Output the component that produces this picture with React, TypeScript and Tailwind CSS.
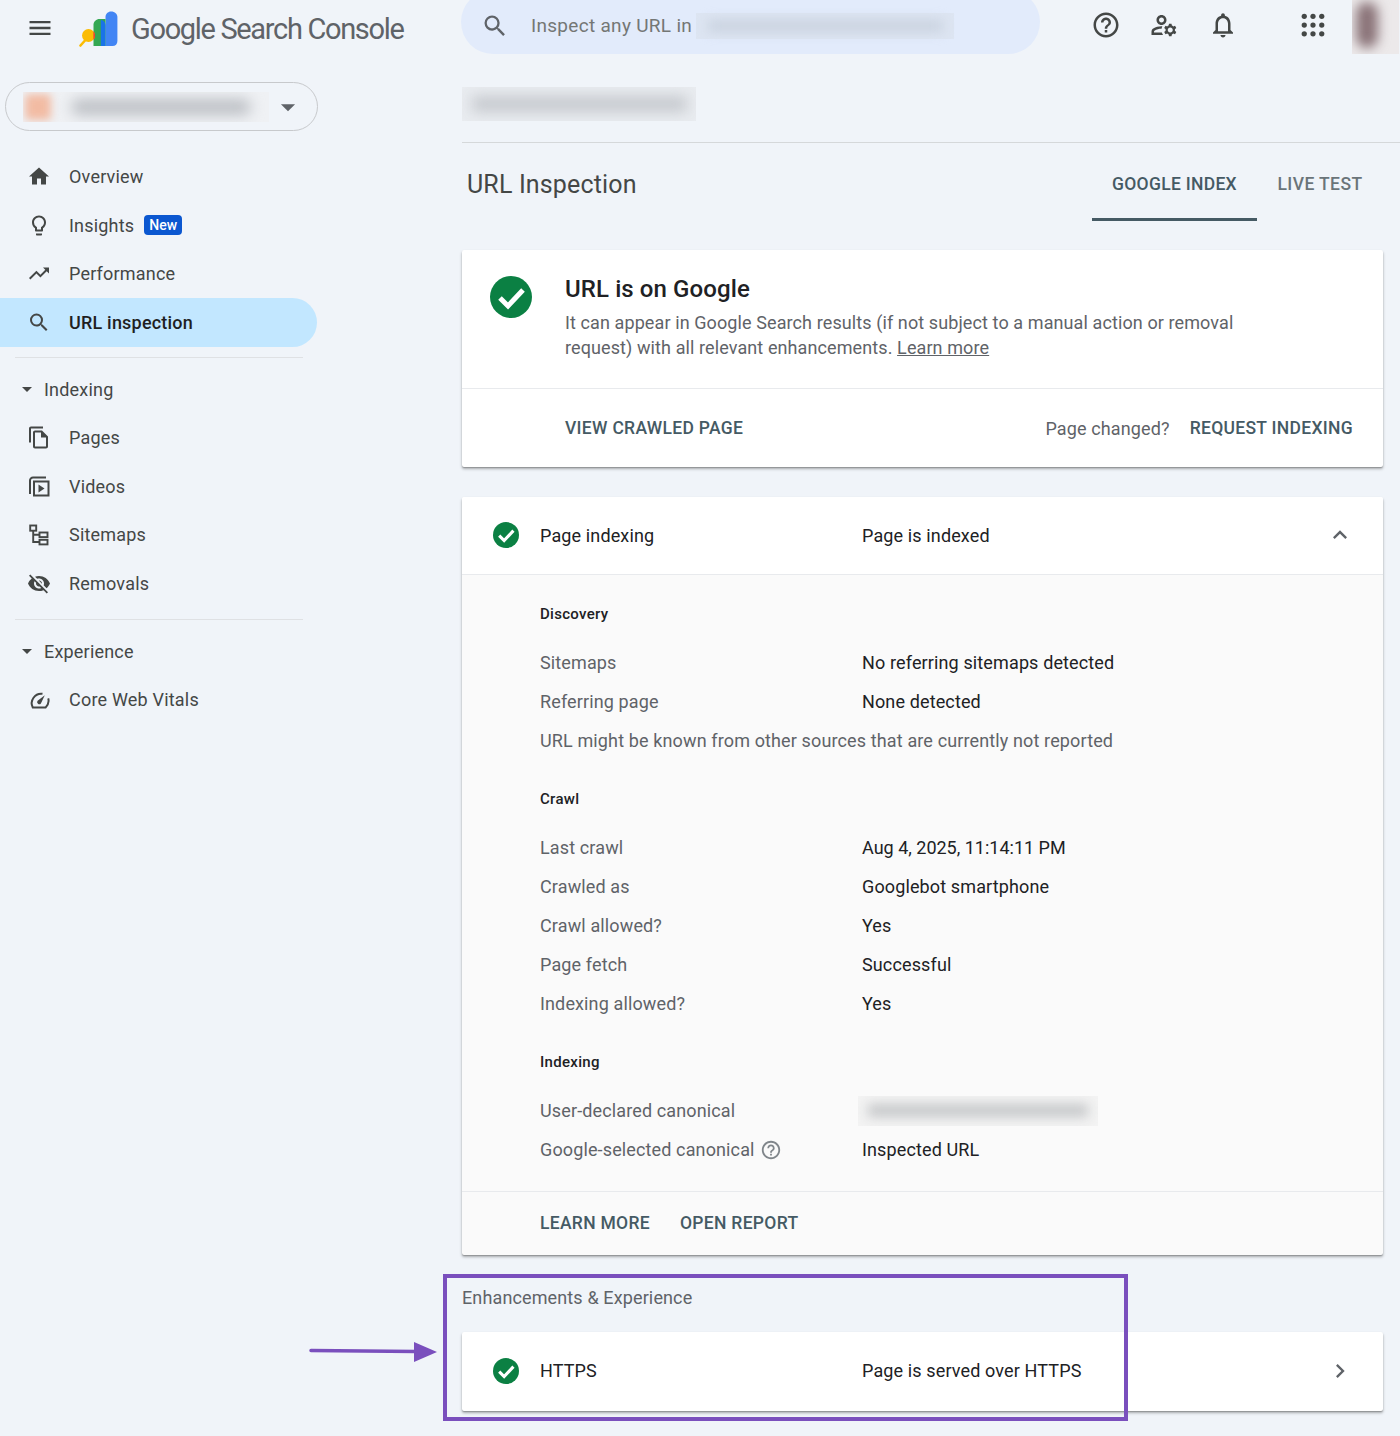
import React from "react";
import {
  MdMenu, MdHome, MdOutlineLightbulb, MdTrendingUp, MdSearch, MdOutlineFileCopy, MdVisibilityOff,
  MdHelpOutline, MdOutlineManageAccounts, MdNotificationsNone, MdExpandLess, MdChevronRight,
  MdArrowDropDown, MdOutlineHelpOutline,
} from "react-icons/md";

function VideosIcon() {
  return (
    <svg viewBox="0 0 24 24" className="w-6 h-6" fill="none" stroke="#444746" strokeWidth="2">
      <path d="M3 20V6.500a3 3 0 0 1 3-3h13" />
      <rect x="7" y="7.500" width="14.500" height="14" />
      <path d="M11.500 10.500v8l6-4z" fill="#444746" stroke="none" />
    </svg>
  );
}
function SitemapIcon() {
  return (
    <svg viewBox="0 0 24 24" className="w-6 h-6" fill="none" stroke="#444746" strokeWidth="1.900">
      <rect x="3.200" y="2.500" width="6" height="5.200" />
      <rect x="12.500" y="9.500" width="8" height="4.600" />
      <rect x="12.500" y="16.800" width="8" height="4.600" />
      <path d="M6.200 7.700V19h6.300M6.200 11.800h6.300" />
    </svg>
  );
}
function GaugeIcon() {
  return (
    <svg viewBox="0 0 24 24" className="w-6 h-6" fill="none" stroke="#444746" strokeWidth="2">
      <path d="M15.500 6.800A9.500 9.500 0 0 0 5.800 20.500h12.800a9.500 9.500 0 0 0 3-6.500c0-1-.1-1.800-.4-2.600" />
      <path d="M10.600 13.800 17.800 8.200l-3.900 8.200a2 2 0 0 1-3.300-2.600z" fill="#444746" stroke="none" />
    </svg>
  );
}
function AppsIcon() {
  const dots = [5, 12, 19];
  return (
    <svg viewBox="0 0 24 24" className="w-[30px] h-[30px]" fill="#444746">
      {dots.map((y) => dots.map((x) => <circle key={`${x}-${y}`} cx={x} cy={y} r="2.100" />))}
    </svg>
  );
}
function CheckIcon({ size }: { size: "lg" | "sm" }) {
  return (
    <svg viewBox="0 0 42 42" className={`block ${size === "lg" ? "w-[42px] h-[42px]" : "w-[26px] h-[26px]"}`}>
      <circle cx="21" cy="21" r="21" fill="#0b8043" />
      <path d="M10 22l8 8 15-16" fill="none" stroke="#fff" strokeWidth="5" />
    </svg>
  );
}
function Logo() {
  return (
    <svg viewBox="0 0 40 40" className="block w-10 h-10 shrink-0">
      <path d="M32 2.500c-3 0-5.500 2.400-5.500 5.500v29h7c3 0 4.900-2 4.900-5V8c0-3-2.400-5.500-6.400-5.500z" fill="#4285f4" />
      <path d="M14.500 15.500c0-2.800 2.800-5.500 6-5.500h6v27h-12z" fill="#34a853" />
      <path d="M21.800 10.800a6 6 0 0 1 4.700 5.300V37h-4.700z" fill="#1a73e8" />
      <circle cx="9.500" cy="26.500" r="6.500" fill="#fbbc04" />
      <path d="M14.500 22.300a6.500 6.500 0 0 1 0 8.400l-.1.100v-8.500z" fill="#ea4335" />
      <path d="M1.500 36.500l4.500-5" stroke="#fbbc04" strokeWidth="2.600" strokeLinecap="round" />
    </svg>
  );
}

function NavItem({ icon, label, active, children }: { icon: React.ReactNode; label: string; active?: boolean; children?: React.ReactNode }) {
  return (
    <div className={`h-[48.750px] w-[317px] flex items-center pl-[27px] rounded-r-full text-[18px] tracking-[0.2px] ${active ? "bg-[#c2e7ff] text-[#1f1f1f] font-medium" : "text-[#444746]"}`}>
      <span className="w-6 h-6 flex items-center justify-center text-[#444746] text-[25px] shrink-0">{icon}</span>
      <span className="ml-[18px]">{label}</span>
      {children}
    </div>
  );
}
function Group({ label }: { label: string }) {
  return (
    <div className="h-[48px] flex items-center text-[18px] tracking-[0.2px] text-[#444746]">
      <span className="w-0 h-0 ml-[22px] border-x-[5px] border-x-transparent border-t-[5px] border-t-[#444746]" />
      <span className="ml-[12px]">{label}</span>
    </div>
  );
}
function Row({ label, value, children }: { label: string; value?: React.ReactNode; children?: React.ReactNode }) {
  return (
    <div className="h-[39px] flex items-center text-[18px] tracking-[0.13px]">
      <div className="w-[322px] shrink-0 flex items-center text-[#5f6368]">{label}{children}</div>
      <div className="text-[#202124]">{value}</div>
    </div>
  );
}
function SectionTitle({ children, className }: { children: React.ReactNode; className: string }) {
  return <div className={`text-[15px] font-medium tracking-[0.3px] text-[#202124] leading-5 ${className}`}>{children}</div>;
}
const actionText = "text-[17.500px] font-medium tracking-[0.3px] text-[#455a64]";

export default function App() {
  return (
    <div className="relative w-[1400px] h-[1436px] overflow-hidden bg-[#f0f4f9] font-['Roboto',sans-serif]">
      <div className="flex h-full">
        <aside className="w-[462px] shrink-0">
          <div className="h-[56px] flex items-center">
            <MdMenu className="ml-[26px] text-[#444746] text-[28px]" />
            <span className="ml-[25px] mt-[1px]"><Logo /></span>
            <span className="ml-[12px] mt-[4px] text-[29px] tracking-[-1.330px] text-[#5f6368]">Google Search Console</span>
          </div>
          <div className="ml-[5px] mt-[26px] w-[313px] h-[49px] rounded-full border border-[#c7c9cc] flex items-center overflow-hidden">
            <div className="ml-[17px] w-[246px] h-[30px] flex items-center overflow-hidden bg-[#eff1f4]">
              <div className="ml-[2px] w-[26px] h-[26px] rounded-sm bg-[#f2bba3] blur-[4px]" />
              <div className="ml-[20px] w-[180px] h-[16px] rounded-full bg-[#bcbfc4] blur-[7px]" />
            </div>
            <MdArrowDropDown className="ml-[2px] text-[#5f6368] text-[34px]" />
          </div>
          <nav className="mt-[21px]">
            <NavItem icon={<MdHome />} label="Overview" />
            <NavItem icon={<MdOutlineLightbulb />} label="Insights">
              <span className="ml-[10px] h-5 px-[5px] flex items-center rounded-[4px] bg-[#0b57d0] text-white text-[14px] font-medium tracking-normal">New</span>
            </NavItem>
            <NavItem icon={<MdTrendingUp />} label="Performance" />
            <NavItem icon={<MdSearch />} label="URL inspection" active />
            <div className="ml-[15px] mt-[10px] mb-[7px] w-[288px] h-px bg-[#dfe1e4]" />
            <Group label="Indexing" />
            <NavItem icon={<MdOutlineFileCopy />} label="Pages" />
            <NavItem icon={<VideosIcon />} label="Videos" />
            <NavItem icon={<SitemapIcon />} label="Sitemaps" />
            <NavItem icon={<MdVisibilityOff />} label="Removals" />
            <div className="ml-[15px] mt-[11px] mb-[7px] w-[288px] h-px bg-[#dfe1e4]" />
            <Group label="Experience" />
            <NavItem icon={<GaugeIcon />} label="Core Web Vitals" />
          </nav>
        </aside>

        <main className="w-[921px] shrink-0">
          <div className="relative h-[54px] w-[960px] flex">
            <div className="-mt-[10px] w-[579px] h-[64px] rounded-[32px] bg-[#e2ebfb] flex items-center pt-[8px] -ml-px shrink-0">
              <MdSearch className="ml-[20px] text-[#5f6368] text-[28px]" />
              <span className="ml-[22px] text-[19px] text-[#747775] tracking-[0.3px]">Inspect any URL in</span>
              <div className="ml-[4px] w-[258px] h-[26px] bg-[#dde5f2] flex items-center justify-center">
                <div className="w-[235px] h-[12px] bg-[#c9d2df] blur-[6px]" />
              </div>
            </div>
            <div className="flex items-center text-[#444746] text-[30px] -mt-[4px] shrink-0">
              <MdHelpOutline className="ml-[51px]" />
              <MdOutlineManageAccounts className="ml-[28px]" />
              <MdNotificationsNone className="ml-[29px]" />
              <span className="ml-[60px]"><AppsIcon /></span>
            </div>
            <div className="-mt-[2px] ml-[24px] w-[47px] h-[56px] bg-[#ece9ea] overflow-hidden shrink-0">
              <div className="ml-[4px] mt-[4px] w-[22px] h-[46px] rounded-full bg-[#8a7378] blur-[6px]" />
            </div>
          </div>

          <div className="mt-[33px] w-[234px] h-[34px] bg-[#e9ecf0] flex items-center justify-center overflow-hidden">
            <div className="w-[215px] h-[16px] bg-[#c6c9ce] blur-[7px]" />
          </div>
          <div className="mt-[21px] h-px w-[938px] bg-[#d5d8da]" />

          <div className="h-[78px] flex items-center justify-between">
            <h1 className="ml-[5px] mt-[4px] text-[25px] leading-none tracking-[0.15px] text-[#444746]">URL Inspection</h1>
            <div className="flex h-full">
              <div className="w-[165px] flex items-center justify-center border-b-[3px] border-[#455a64] pt-[8px] text-[17.500px] font-medium tracking-[0.3px] text-[#455a64]">GOOGLE INDEX</div>
              <div className="w-[126px] flex items-center justify-center pt-[5px] text-[17.500px] font-medium tracking-[0.4px] text-[#6a7479]">LIVE TEST</div>
            </div>
          </div>

          <section className="mt-[29px] h-[217px] bg-white rounded-[2px] shadow-[0_1px_1px_#0000002e,0_2px_3px_#0000004d]">
            <div className="h-[139px] flex border-b border-[#e8eaed]">
              <div className="ml-[28px] mt-[26px] shrink-0"><CheckIcon size="lg" /></div>
              <div className="ml-[33px] mt-[21px]">
                <h2 className="text-[24px] leading-9 font-medium tracking-[0.1px] text-[#202124]">URL is on Google</h2>
                <p className="mt-[4px] w-[700px] text-[18px] leading-[24.500px] tracking-[0.1px] text-[#5f6368]">
                  It can appear in Google Search results (if not subject to a manual action or removal request) with all relevant enhancements. <span className="underline text-[#5f6368]">Learn more</span>
                </p>
              </div>
            </div>
            <div className="h-[78px] flex items-center justify-between pl-[103px] pr-[30px] pt-px">
              <span className={actionText}>VIEW CRAWLED PAGE</span>
              <div className="flex items-center">
                <span className="text-[18px] tracking-[0.13px] text-[#5f6368]">Page changed?</span>
                <span className={`ml-[20px] ${actionText}`}>REQUEST INDEXING</span>
              </div>
            </div>
          </section>

          <section className="mt-[30px] h-[758px] bg-[#fafafa] rounded-[2px] shadow-[0_1px_1px_#0000002e,0_2px_3px_#0000004d] flex flex-col">
            <div className="h-[78px] shrink-0 bg-white border-b border-[#e8eaed] flex items-center text-[18px] tracking-[0.13px] text-[#202124] rounded-t-[2px]">
              <div className="ml-[31px] mb-[2px]"><CheckIcon size="sm" /></div>
              <div className="ml-[21px] w-[322px]">Page indexing</div>
              <div>Page is indexed</div>
              <MdExpandLess className="ml-auto mr-[29px] mb-[2px] text-[28px] text-[#5f6368]" />
            </div>
            <div className="pl-[78px] flex-1">
              <SectionTitle className="mt-[29px] mb-[19px]">Discovery</SectionTitle>
              <Row label="Sitemaps" value="No referring sitemaps detected" />
              <Row label="Referring page" value="None detected" />
              <div className="h-[39px] flex items-center text-[18px] tracking-[0.13px] text-[#5f6368]">URL might be known from other sources that are currently not reported</div>
              <SectionTitle className="mt-[29px] mb-[19px]">Crawl</SectionTitle>
              <Row label="Last crawl" value={<span className="tracking-normal">Aug 4, 2025, 11:14:11 PM</span>} />
              <Row label="Crawled as" value="Googlebot smartphone" />
              <Row label="Crawl allowed?" value="Yes" />
              <Row label="Page fetch" value="Successful" />
              <Row label="Indexing allowed?" value="Yes" />
              <SectionTitle className="mt-[29px] mb-[19px]">Indexing</SectionTitle>
              <Row label="User-declared canonical" value={
                <div className="-ml-[4px] w-[240px] h-[30px] bg-[#f3f3f3] flex items-center justify-center overflow-hidden">
                  <div className="w-[220px] h-[13px] bg-[#c5c7c9] blur-[6px]" />
                </div>
              } />
              <Row label="Google-selected canonical" value="Inspected URL">
                <MdOutlineHelpOutline className="ml-[5px] text-[22px] text-[#80868b]" />
              </Row>
            </div>
            <div className="h-[64px] shrink-0 border-t border-[#e8eaed] flex items-center gap-[30px] pl-[78px] pb-px">
              <span className={actionText}>LEARN MORE</span>
              <span className={actionText}>OPEN REPORT</span>
            </div>
          </section>

          <div className="mt-[31px] text-[18px] leading-6 tracking-[0.13px] text-[#5f6368]">Enhancements &amp; Experience</div>
          <section className="mt-[22px] h-[79px] pb-[2px] bg-white rounded-[2px] shadow-[0_1px_1px_#0000002e,0_2px_3px_#0000004d] flex items-center text-[18px] tracking-[0.13px] text-[#202124]">
            <div className="ml-[31px]"><CheckIcon size="sm" /></div>
            <div className="ml-[21px] w-[322px]">HTTPS</div>
            <div>Page is served over HTTPS</div>
            <MdChevronRight className="ml-auto mr-[29px] text-[28px] text-[#5f6368]" />
          </section>
        </main>
      </div>

      <div className="absolute left-[443px] top-[1274px] w-[685px] h-[147px] border-[4px] border-[#7a4fbd] pointer-events-none" />
      <svg className="absolute left-[308px] top-[1340px] w-[132px] h-[24px]" viewBox="0 0 132 24">
        <path d="M3 10.500 108 11.500" stroke="#7a4fbd" strokeWidth="3.500" strokeLinecap="round" />
        <path d="M106 2l23 10-23 10z" fill="#7a4fbd" />
      </svg>
    </div>
  );
}
